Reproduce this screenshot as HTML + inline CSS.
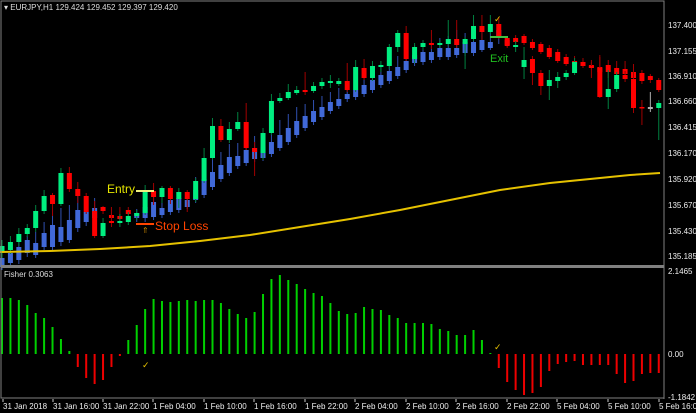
<!DOCTYPE html>
<html><head><meta charset="utf-8"><style>
html,body{margin:0;padding:0;background:#000;width:696px;height:413px;overflow:hidden}
svg{display:block}
text{font-family:"Liberation Sans",sans-serif}
</style></head><body>
<svg id="s" width="696" height="413" xmlns="http://www.w3.org/2000/svg">
<rect width="696" height="413" fill="#000"/>
<g id="g"></g>
<polyline fill="none" stroke="#e6c200" stroke-width="2" points="0,252 50,251 100,249 150,246 200,241 250,235 300,227 350,219 400,210 450,200 500,190 550,183 600,178 630,175 660,173"/>
<!-- frames -->
<rect x="1" y="1" width="663" height="397" fill="none" stroke="#808080" stroke-width="1"/>
<rect x="1" y="265" width="663" height="3" fill="#808080"/>
<line x1="664" y1="1" x2="664" y2="399" stroke="#808080"/>
<text x="4" y="10" font-size="8" fill="#ddd">▾ EURJPY,H1  129.424 129.452 129.397 129.420</text>
<text x="4" y="277" font-size="8" fill="#ddd">Fisher 0.3063</text>
<g font-size="8" fill="#eee">
<text x="668" y="28">137.400</text><text x="668" y="54">137.155</text><text x="668" y="79">136.910</text><text x="668" y="104">136.660</text><text x="668" y="130">136.415</text><text x="668" y="156">136.170</text><text x="668" y="182">135.920</text><text x="668" y="208">135.670</text><text x="668" y="234">135.430</text><text x="668" y="259">135.185</text>
<text x="668" y="274">2.1465</text><text x="668" y="357">0.00</text><text x="668" y="400">-1.1842</text>
<text x="3" y="409">31 Jan 2018</text><text x="53" y="409">31 Jan 16:00</text><text x="103" y="409">31 Jan 22:00</text><text x="153" y="409">1 Feb 04:00</text><text x="204" y="409">1 Feb 10:00</text><text x="254" y="409">1 Feb 16:00</text><text x="305" y="409">1 Feb 22:00</text><text x="355" y="409">2 Feb 04:00</text><text x="406" y="409">2 Feb 10:00</text><text x="456" y="409">2 Feb 16:00</text><text x="507" y="409">2 Feb 22:00</text><text x="557" y="409">5 Feb 04:00</text><text x="608" y="409">5 Feb 10:00</text><text x="659" y="409">5 Feb 16:00</text>
</g>
<g id="ticks" stroke="#ccc"></g>
<text x="107" y="193" font-size="12" fill="#e6e600">Entry</text>
<line x1="136" y1="191" x2="154" y2="191" stroke="#f0f080" stroke-width="2"/>
<line x1="136" y1="224" x2="154" y2="224" stroke="#ff4400" stroke-width="2"/>
<text x="155" y="230" font-size="12" fill="#ff4400">Stop Loss</text>
<text x="142" y="233" font-size="8" fill="#c08000">⇑</text>
<text x="490" y="62" font-size="11" fill="#20c020">Exit</text>
<line x1="490" y1="37" x2="508" y2="37" stroke="#40c040" stroke-width="2"/>
<text x="494" y="22" font-size="9" fill="#e6c200">✓</text>
<text x="142" y="368" font-size="9" fill="#e6c200">✓</text>
<text x="494" y="350" font-size="9" fill="#e6c200">✓</text>
</svg>
<script>
var M=[["G",246,252,240,258],["G",242,250,236,254],["G",234,242,228,246],["G",228,234,224,237],["G",211,228,205,232],["G",196,211,190,214],["R",195,204,193,216],["G",173,204,168,206],["R",173,189,167,192],["R",189,196,182,203],["R",196,212,193,214],["R",211,236,201,238],["G",223,236,218,238],["R",221,223,207,227],["G",221,223,214,227],["G",216,222,212,225],["G",213,216,210,220],["G",191,213,185,215],["R",191,197,183,205],["G",188,197,186,203],["R",188,199,186,204],["G",192,199,188,208],["R",192,199,190,212],["G",181,199,178,202],["G",158,181,148,183],["G",126,158,118,160],["R",126,140,119,142],["G",129,140,122,143],["G",122,129,112,131],["R",122,148,103,150],["R",148,152,142,176],["G",133,153,128,160],["G",101,133,94,135],["G",98,101,93,103],["G",92,98,84,100],["G",90,93,86,95],["R",90,92,72,95],["G",86,91,82,93],["G",82,86,78,89],["G",81,83,75,88],["G",81,84,78,86],["R",81,90,63,92],["G",67,90,60,92],["R",68,78,59,80],["G",66,78,61,81],["G",65,67,61,72],["G",47,66,44,69],["G",33,47,30,52],["R",33,59,26,61],["G",47,59,43,63],["G",43,47,40,50],["R",43,45,30,49],["G",43,45,40,48],["G",39,44,20,46],["R",39,45,20,48],["G",39,44,37,69],["G",26,39,15,41],["R",26,32,15,40],["G",24,32,15,34],["R",24,37,17,39],["R",38,46,36,48],["G",45,47,41,52],["G",60,67,47,79],["R",59,73,56,85],["R",73,86,70,95],["G",80,86,70,100],["G",77,81,72,88],["G",73,77,70,80],["G",62,73,58,75],["R",62,66,58,68],["R",66,68,60,78],["R",68,97,55,98],["G",89,97,70,109],["G",75,89,72,92],["R",75,79,71,82],["R",79,108,72,113],["R",107,108,100,125],["W",107,109,92,112],["G",103,108,100,140]];
var S=[["B",258,267,252,270],["B",253,263,246,268],["B",247,260,240,264],["B",240,253,236,257],["B",243,255,232,258],["B",233,247,222,250],["B",225,247,210,250],["B",227,242,208,246],["B",220,240,205,243],["B",210,228,196,232],["B",212,222,200,226],["B",208,218,198,222],["R",207,211,206,214],["R",215,218,207,223],["R",216,219,207,224],["R",210,214,207,218],["B",213,218,209,222],["B",207,218,200,222],["B",202,217,196,220],["B",208,215,200,218],["B",200,212,196,215],["B",198,210,192,213],["B",200,207,192,209],["B",190,200,177,203],["B",179,195,166,198],["B",172,187,159,190],["B",165,179,152,182],["B",157,173,144,176],["B",156,166,143,169],["B",150,163,138,166],["B",148,159,136,162],["B",147,158,132,161],["B",142,154,126,157],["B",135,148,120,151],["B",128,142,114,145],["B",121,135,107,138],["B",116,128,104,131],["B",111,122,100,125],["B",107,117,96,120],["B",102,111,92,114],["B",99,106,88,109],["B",94,99,85,102],["B",90,97,80,100],["B",85,94,75,97],["B",80,90,70,93],["B",75,85,65,88],["B",71,81,60,84],["B",67,76,56,79],["B",61,70,50,73],["B",55,63,45,66],["B",52,62,42,65],["B",52,60,40,63],["B",48,57,38,60],["B",48,57,36,60],["B",48,55,30,58],["B",42,53,33,56],["B",42,53,33,56],["B",40,50,30,52],["B",42,48,28,50],["B",30,37,26,44],["R",40,45,36,47],["R",38,42,35,44],["R",36,43,34,45],["R",42,48,39,50],["R",44,52,42,54],["R",48,57,45,59],["R",52,61,49,63],["R",57,64,54,66],["R",61,64,56,68],["R",62,66,60,68],["R",65,68,62,70],["R",67,72,57,78],["R",65,72,60,78],["R",68,74,61,78],["R",69,74,61,77],["R",72,78,64,80],["R",73,81,70,84],["R",76,80,74,83],["R",80,90,78,92]];
var H=[298,298,300,305,313,318,327,339,351,367,378,384,380,367,356,340,325,309,299,301,302,301,300,301,300,300,303,309,314,318,312,294,279,275,280,284,289,293,296,303,311,314,313,307,309,310,315,318,323,323,323,324,329,331,335,335,330,340,353,368,382,390,395,393,387,371,364,362,361,365,365,365,365,374,383,381,374,373,373];
var C={G:"#00ee80",R:"#ff0000",B:"#4169d8",W:"#b0b0b0"},WC={G:"#008040",R:"#a00000",B:"#3050b0",W:"#b0b0b0"};
var o="";
function cand(a,x){var c=C[a[0]];o+='<rect x="'+(x-0.5)+'" y="'+a[3]+'" width="1" height="'+(a[4]-a[3])+'" fill="'+WC[a[0]]+'"/>';o+='<rect x="'+(x-2.5)+'" y="'+a[1]+'" width="5" height="'+Math.max(1.5,a[2]-a[1])+'" fill="'+c+'"/>';}
for(var k=0;k<79;k++){var x=2+8.42*k;cand(S[k],x);}
for(var k=0;k<79;k++){var x=2+8.42*k;cand(M[k],x);}
for(var k=0;k<79;k++){var x=2+8.42*k,h=H[k];if(h<354)o+='<rect x="'+(x-1)+'" y="'+h+'" width="2" height="'+(354-h)+'" fill="#00d000"/>';else o+='<rect x="'+(x-1)+'" y="354" width="2" height="'+(h-354)+'" fill="#ee0000"/>';}
document.getElementById("g").innerHTML=o;
var t="";[3,53,103,153,204,254,305,355,406,456,507,557,608,659].forEach(function(x){t+='<line x1="'+x+'" y1="399" x2="'+x+'" y2="402"/>';});
document.getElementById("ticks").innerHTML=t;
</script>
</body></html>
